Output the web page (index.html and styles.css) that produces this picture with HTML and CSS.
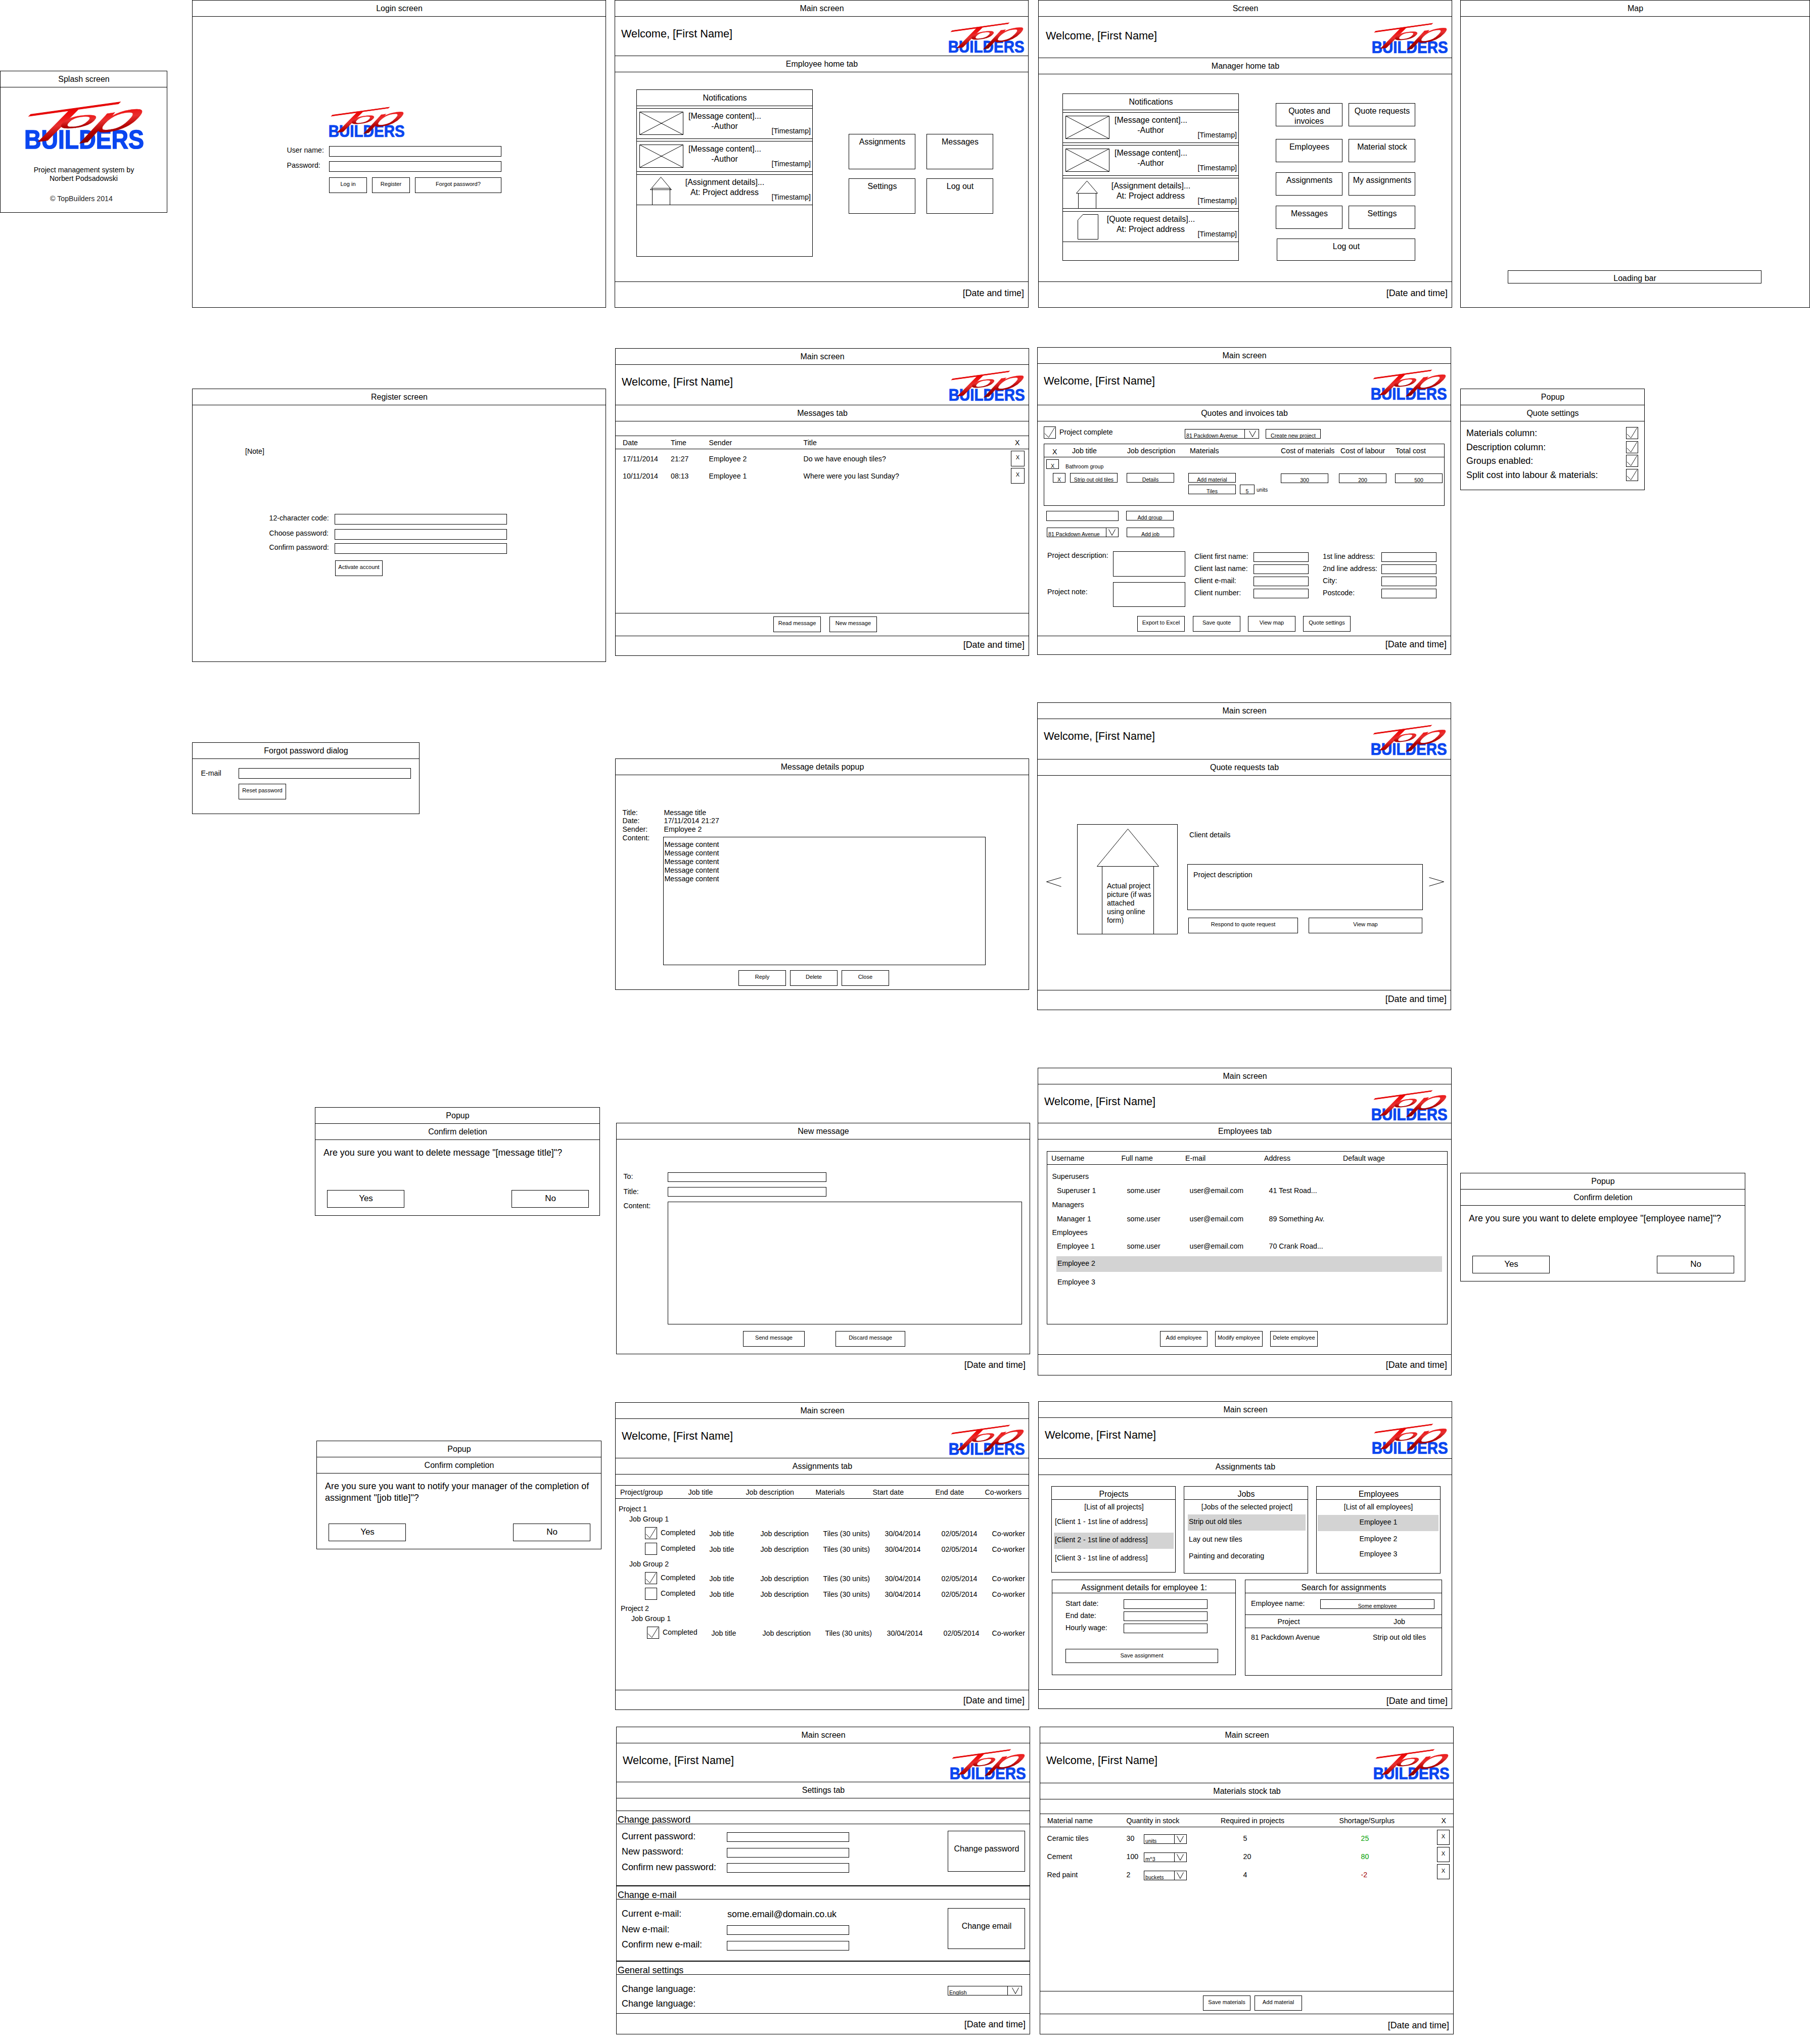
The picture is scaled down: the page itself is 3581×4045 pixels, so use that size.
FILE: index.html
```html
<!DOCTYPE html>
<html lang="en">
<head>
<meta charset="utf-8">
<title>TopBuilders wireframes</title>
<link rel="stylesheet" href="styles.css">
</head>
<body>
<svg class="sprites" aria-hidden="true">
  <defs>
    <linearGradient id="brush" x1="0" y1="0" x2="0" y2="1">
      <stop offset="0" stop-color="#c80000"/>
      <stop offset=".25" stop-color="#f00a0a"/>
      <stop offset=".5" stop-color="#e83030"/>
      <stop offset=".75" stop-color="#b00000"/>
      <stop offset="1" stop-color="#800000"/>
    </linearGradient>
    <symbol id="logo" viewBox="0 0 240 98">
      <text class="logo-builders" x="1" y="96.5" textLength="237" lengthAdjust="spacingAndGlyphs">BUILDERS</text>
      <text class="logo-top" transform="matrix(3.07 -.426 -.88 .89 -55.6 95)">T</text>
      <text class="logo-o" transform="matrix(1.31 -.1 -.45 .47 60 59)">o</text>
      <text class="logo-o" transform="matrix(1.8 -.28 -.747 .8 113.8 72.1)">p</text>
    </symbol>
    <symbol id="envelope" viewBox="0 0 87 46"><path d="M.5.5h86v45H.5zL86.5 45.5M.5 45.5 86.5.5"/></symbol>
    <symbol id="house" viewBox="0 0 44 56"><path d="M21.5.5 42.5 25.5H.5zM4.5 22.5h35v33h-35z"/></symbol>
    <symbol id="house-plain" viewBox="0 0 44 56"><path d="M21.5 1 42.5 25.5H.5zM4.5 25.5v30M39.5 25.5v30"/></symbol>
    <symbol id="document" viewBox="0 0 41 50"><path d="M10.5.5h30v49H.5v-38z"/></symbol>
    <symbol id="tick" viewBox="0 0 24 24"><path d="M1 14 9.5 22.5 22.5 1"/></symbol>
    <symbol id="chevron" viewBox="0 0 14 13"><path d="M.5.5 7 12.5 13.5.5"/></symbol>
  </defs>
</svg>

<main class="canvas">

  <section class="window splash">
    <h2 class="bar">Splash screen</h2>
    <svg class="logo logo-large"><use href="#logo"/></svg>
    <p class="credit">Project management system by<br>Norbert Podsadowski</p>
    <p class="copyright">© TopBuilders 2014</p>
  </section>

  <section class="window login">
    <h2 class="bar">Login screen</h2>
    <svg class="logo"><use href="#logo"/></svg>
    <div class="login-form">
      <label>User name:</label><span class="field"></span>
      <label>Password:</label><span class="field"></span>
      <div class="login-actions"><span class="btn">Log in</span><span class="btn">Register</span><span class="btn">Forgot password?</span></div>
    </div>
  </section>

  <section class="window screen employee-home">
    <h2 class="bar">Main screen</h2>
    <header class="banner"><p>Welcome, [First Name]</p><svg class="logo"><use href="#logo"/></svg></header>
    <h3 class="bar">Employee home tab</h3>
    <div class="body home-body">
      <div class="notifications">
        <h4>Notifications</h4>
        <div class="note"><svg class="envelope"><use href="#envelope"/></svg><p>[Message content]...<br>-Author</p><time>[Timestamp]</time></div>
        <div class="note"><svg class="envelope"><use href="#envelope"/></svg><p>[Message content]...<br>-Author</p><time>[Timestamp]</time></div>
        <div class="note late"><svg class="house"><use href="#house"/></svg><p>[Assignment details]...<br>At: Project address</p><time>[Timestamp]</time></div>
      </div>
      <nav class="tiles"><span>Assignments</span><span>Messages</span><span>Settings</span><span>Log out</span></nav>
    </div>
    <footer>[Date and time]</footer>
  </section>

  <section class="window screen manager-home">
    <h2 class="bar">Screen</h2>
    <header class="banner"><p>Welcome, [First Name]</p><svg class="logo"><use href="#logo"/></svg></header>
    <h3 class="bar">Manager home tab</h3>
    <div class="body home-body">
      <div class="notifications">
        <h4>Notifications</h4>
        <div class="note"><svg class="envelope"><use href="#envelope"/></svg><p>[Message content]...<br>-Author</p><time>[Timestamp]</time></div>
        <div class="note"><svg class="envelope"><use href="#envelope"/></svg><p>[Message content]...<br>-Author</p><time>[Timestamp]</time></div>
        <div class="note"><svg class="house"><use href="#house-plain"/></svg><p>[Assignment details]...<br>At: Project address</p><time>[Timestamp]</time></div>
        <div class="note late"><svg class="document"><use href="#document"/></svg><p>[Quote request details]...<br>At: Project address</p><time>[Timestamp]</time></div>
      </div>
      <nav class="tiles"><span>Quotes and<br>invoices</span><span>Quote requests</span><span>Employees</span><span>Material stock</span><span>Assignments</span><span>My assignments</span><span>Messages</span><span>Settings</span><span class="wide">Log out</span></nav>
    </div>
    <footer>[Date and time]</footer>
  </section>

  <section class="window map">
    <h2 class="bar">Map</h2>
    <div class="progress">Loading bar</div>
  </section>

  <section class="window register">
    <h2 class="bar">Register screen</h2>
    <p class="register-note">[Note]</p>
    <div class="register-form">
      <label>12-character code:</label><span class="field"></span>
      <label>Choose password:</label><span class="field"></span>
      <label>Confirm password:</label><span class="field"></span>
      <span class="btn">Activate account</span>
    </div>
  </section>

  <section class="window screen messages">
    <h2 class="bar">Main screen</h2>
    <header class="banner"><p>Welcome, [First Name]</p><svg class="logo"><use href="#logo"/></svg></header>
    <h3 class="bar">Messages tab</h3>
    <div class="body">
      <div class="spacer"></div>
      <div class="thead"><span>Date</span><span>Time</span><span>Sender</span><span>Title</span><span class="remove-head">X</span></div>
      <div class="trow"><span>17/11/2014</span><span>21:27</span><span>Employee 2</span><span>Do we have enough tiles?</span><span class="btn">X</span></div>
      <div class="trow"><span>10/11/2014</span><span>08:13</span><span>Employee 1</span><span>Where were you last Sunday?</span><span class="btn">X</span></div>
    </div>
    <div class="actions"><span class="btn">Read message</span><span class="btn">New message</span></div>
    <footer>[Date and time]</footer>
  </section>

  <section class="window screen quotes">
    <h2 class="bar">Main screen</h2>
    <header class="banner"><p>Welcome, [First Name]</p><svg class="logo"><use href="#logo"/></svg></header>
    <h3 class="bar">Quotes and invoices tab</h3>
    <div class="body">
      <div class="quote-tools">
        <svg class="check"><use href="#tick"/></svg><span class="check-label">Project complete</span>
        <span class="select"><span>81 Packdown Avenue</span><i><svg class="chevron"><use href="#chevron"/></svg></i></span>
        <span class="mini">Create new project</span>
      </div>
      <div class="quote-table">
        <div class="quote-head"><span class="drop">X</span><span>Job title</span><span>Job description</span><span>Materials</span><span>Cost of materials</span><span>Cost of labour</span><span>Total cost</span></div>
        <div class="quote-group"><span class="mini">X</span><span class="tiny">Bathroom group</span></div>
        <div class="quote-job"><span class="mini">X</span><span class="mini">Strip out old tiles</span><span class="mini">Details</span><span class="mini">Add material</span><span class="mini cost">300</span><span class="mini cost">200</span><span class="mini cost">500</span></div>
        <div class="quote-material"><span class="mini">Tiles</span><span class="mini">5</span><span class="tiny">units</span></div>
      </div>
      <div class="quote-add"><span class="field"></span><span class="mini">Add group</span></div>
      <div class="quote-add second"><span class="select"><span>81 Packdown Avenue</span><i><svg class="chevron"><use href="#chevron"/></svg></i></span><span class="mini">Add job</span></div>
      <div class="quote-form">
        <div class="form-notes"><label>Project description:</label><span class="field"></span><label class="lower">Project note:</label><span class="field short"></span></div>
        <div class="form-client"><label>Client first name:</label><span class="field"></span><label>Client last name:</label><span class="field"></span><label>Client e-mail:</label><span class="field"></span><label>Client number:</label><span class="field"></span></div>
        <div class="form-client address"><label>1st line address:</label><span class="field"></span><label>2nd line address:</label><span class="field"></span><label>City:</label><span class="field"></span><label>Postcode:</label><span class="field"></span></div>
      </div>
      <div class="quote-actions"><span class="btn">Export to Excel</span><span class="btn">Save quote</span><span class="btn">View map</span><span class="btn">Quote settings</span></div>
    </div>
    <footer>[Date and time]</footer>
  </section>

  <section class="window quote-settings">
    <h2 class="bar">Popup</h2>
    <h3 class="bar">Quote settings</h3>
    <div class="options">
      <label>Materials column:</label><svg class="check"><use href="#tick"/></svg>
      <label>Description column:</label><svg class="check"><use href="#tick"/></svg>
      <label>Groups enabled:</label><svg class="check"><use href="#tick"/></svg>
      <label>Split cost into labour &amp; materials:</label><svg class="check"><use href="#tick"/></svg>
    </div>
  </section>

  <section class="window forgot">
    <h2 class="bar">Forgot password dialog</h2>
    <div class="forgot-form"><label>E-mail</label><span class="field"></span><span class="btn">Reset password</span></div>
  </section>

  <section class="window message-details">
    <h2 class="bar">Message details popup</h2>
    <div class="message-grid">
      <label>Title:</label><span>Message title</span>
      <label>Date:</label><span>17/11/2014 21:27</span>
      <label>Sender:</label><span>Employee 2</span>
      <label>Content:</label>
      <div class="message-text">Message content<br>Message content<br>Message content<br>Message content<br>Message content</div>
    </div>
    <div class="message-actions"><span class="btn">Reply</span><span class="btn">Delete</span><span class="btn">Close</span></div>
  </section>

  <section class="window screen quote-requests">
    <h2 class="bar">Main screen</h2>
    <header class="banner"><p>Welcome, [First Name]</p><svg class="logo"><use href="#logo"/></svg></header>
    <h3 class="bar">Quote requests tab</h3>
    <div class="body request-body">
      <svg class="arrow" viewBox="0 0 30 19"><path d="M29.5.5.5 9 29.5 18.5"/></svg>
      <div class="picture">
        <svg viewBox="0 0 197 216"><path d="M99.5 8.5 160.500 82.5H38.500zM48.500 82.5V216M150.500 82.5V216"/></svg>
        <p>Actual project<br>picture (if was<br>attached<br>using online<br>form)</p>
      </div>
      <div class="request">
        <p>Client details</p>
        <div class="description">Project description</div>
        <div class="request-actions"><span class="btn">Respond to quote request</span><span class="btn">View map</span></div>
      </div>
      <svg class="arrow" viewBox="0 0 30 19"><path d="M.5.5 29.5 9 .5 17.5"/></svg>
    </div>
    <footer>[Date and time]</footer>
  </section>

  <section class="window confirm confirm-message">
    <h2 class="bar">Popup</h2>
    <h3 class="bar">Confirm deletion</h3>
    <p>Are you sure you want to delete message "[message title]"?</p>
    <div class="choices"><span>Yes</span><span>No</span></div>
  </section>

  <section class="window new-message">
    <h2 class="bar">New message</h2>
    <div class="compose">
      <label>To:</label><span class="field"></span>
      <label>Title:</label><span class="field"></span>
      <label>Content:</label><span class="field large"></span>
    </div>
    <div class="compose-actions"><span class="btn">Send message</span><span class="btn">Discard message</span></div>
  </section>
  <p class="loose-date">[Date and time]</p>

  <section class="window screen employees">
    <h2 class="bar">Main screen</h2>
    <header class="banner"><p>Welcome, [First Name]</p><svg class="logo"><use href="#logo"/></svg></header>
    <h3 class="bar">Employees tab</h3>
    <div class="body">
      <div class="staff">
        <div class="staff-head"><span>Username</span><span>Full name</span><span>E-mail</span><span>Address</span><span>Default wage</span></div>
        <p class="staff-role">Superusers</p>
        <div class="staff-row"><span>Superuser 1</span><span>some.user</span><span>user@email.com</span><span>41 Test Road...</span></div>
        <p class="staff-role">Managers</p>
        <div class="staff-row"><span>Manager 1</span><span>some.user</span><span>user@email.com</span><span>89 Something Av.</span></div>
        <p class="staff-role tight">Employees</p>
        <div class="staff-row tight"><span>Employee 1</span><span>some.user</span><span>user@email.com</span><span>70 Crank Road...</span></div>
        <div class="staff-row selected"><span>Employee 2</span></div>
        <div class="staff-row last"><span>Employee 3</span></div>
      </div>
      <div class="staff-actions"><span class="btn">Add employee</span><span class="btn">Modify employee</span><span class="btn">Delete employee</span></div>
    </div>
    <footer>[Date and time]</footer>
  </section>

  <section class="window confirm confirm-employee">
    <h2 class="bar">Popup</h2>
    <h3 class="bar">Confirm deletion</h3>
    <p>Are you sure you want to delete employee "[employee name]"?</p>
    <div class="choices"><span>Yes</span><span>No</span></div>
  </section>

  <section class="window confirm confirm-completion">
    <h2 class="bar">Popup</h2>
    <h3 class="bar">Confirm completion</h3>
    <p>Are you sure you want to notify your manager of the completion of<br>assignment "[job title]"?</p>
    <div class="choices"><span>Yes</span><span>No</span></div>
  </section>

  <section class="window screen assignments">
    <h2 class="bar">Main screen</h2>
    <header class="banner"><p>Welcome, [First Name]</p><svg class="logo"><use href="#logo"/></svg></header>
    <h3 class="bar">Assignments tab</h3>
    <div class="body">
      <div class="spacer"></div>
      <div class="jobs-head"><span>Project/group</span><span>Job title</span><span>Job description</span><span>Materials</span><span>Start date</span><span>End date</span><span>Co-workers</span></div>
      <p class="project">Project 1</p>
      <p class="group">Job Group 1</p>
      <div class="job"><svg class="check"><use href="#tick"/></svg><b>Completed</b><span>Job title</span><span>Job description</span><span>Tiles (30 units)</span><span>30/04/2014</span><span>02/05/2014</span><span>Co-worker</span></div>
      <div class="job second"><svg class="check"></svg><b>Completed</b><span>Job title</span><span>Job description</span><span>Tiles (30 units)</span><span>30/04/2014</span><span>02/05/2014</span><span>Co-worker</span></div>
      <p class="group next">Job Group 2</p>
      <div class="job"><svg class="check"><use href="#tick"/></svg><b>Completed</b><span>Job title</span><span>Job description</span><span>Tiles (30 units)</span><span>30/04/2014</span><span>02/05/2014</span><span>Co-worker</span></div>
      <div class="job second"><svg class="check"></svg><b>Completed</b><span>Job title</span><span>Job description</span><span>Tiles (30 units)</span><span>30/04/2014</span><span>02/05/2014</span><span>Co-worker</span></div>
      <div class="project-two">
        <p class="project">Project 2</p>
        <p class="group">Job Group 1</p>
        <div class="job"><svg class="check"><use href="#tick"/></svg><b>Completed</b><span>Job title</span><span>Job description</span><span>Tiles (30 units)</span><span>30/04/2014</span><span>02/05/2014</span><span>Co-worker</span></div>
      </div>
    </div>
    <footer>[Date and time]</footer>
  </section>

  <section class="window screen planner">
    <h2 class="bar">Main screen</h2>
    <header class="banner"><p>Welcome, [First Name]</p><svg class="logo"><use href="#logo"/></svg></header>
    <h3 class="bar">Assignments tab</h3>
    <div class="body">
      <div class="lists">
        <div class="card list-projects"><h4>Projects</h4><p class="hint">[List of all projects]</p><p>[Client 1 - 1st line of address]</p><p class="on">[Client 2 - 1st line of address]</p><p>[Client 3 - 1st line of address]</p></div>
        <div class="card list-jobs"><h4>Jobs</h4><p class="hint">[Jobs of the selected project]</p><p class="on">Strip out old tiles</p><p>Lay out new tiles</p><p>Painting and decorating</p></div>
        <div class="card list-employees"><h4>Employees</h4><p class="hint">[List of all employees]</p><p class="on">Employee 1</p><p>Employee 2</p><p>Employee 3</p></div>
      </div>
      <div class="panels">
        <div class="card details">
          <h4>Assignment details for employee 1:</h4>
          <div class="details-form"><label>Start date:</label><span class="field"></span><label>End date:</label><span class="field"></span><label>Hourly wage:</label><span class="field"></span></div>
          <span class="btn">Save assignment</span>
        </div>
        <div class="card search">
          <h4>Search for assignments</h4>
          <div class="search-name"><label>Employee name:</label><span class="mini">Some employee</span></div>
          <div class="search-head"><span>Project</span><span>Job</span></div>
          <div class="search-row"><span>81 Packdown Avenue</span><span>Strip out old tiles</span></div>
        </div>
      </div>
    </div>
    <footer>[Date and time]</footer>
  </section>

  <section class="window screen settings">
    <h2 class="bar">Main screen</h2>
    <header class="banner"><p>Welcome, [First Name]</p><svg class="logo"><use href="#logo"/></svg></header>
    <h3 class="bar">Settings tab</h3>
    <div class="body">
      <div class="spacer"></div>
      <h4>Change password</h4>
      <div class="setting">
        <label>Current password:</label><span class="field"></span><span class="big-btn">Change password</span>
        <label>New password:</label><span class="field"></span>
        <label>Confirm new password:</label><span class="field"></span>
      </div>
      <h4>Change e-mail</h4>
      <div class="setting email">
        <label>Current e-mail:</label><span>some.email@domain.co.uk</span><span class="big-btn">Change email</span>
        <label>New e-mail:</label><span class="field"></span>
        <label>Confirm new e-mail:</label><span class="field"></span>
      </div>
      <h4>General settings</h4>
      <div class="setting general">
        <label>Change language:</label><span class="select"><span>English</span><i><svg class="chevron"><use href="#chevron"/></svg></i></span>
        <label>Change language:</label>
      </div>
    </div>
    <footer>[Date and time]</footer>
  </section>

  <section class="window screen materials">
    <h2 class="bar">Main screen</h2>
    <header class="banner"><p>Welcome, [First Name]</p><svg class="logo"><use href="#logo"/></svg></header>
    <h3 class="bar">Materials stock tab</h3>
    <div class="body">
      <div class="spacer"></div>
      <div class="stock-head"><span>Material name</span><span>Quantity in stock</span><span>Required in projects</span><span>Shortage/Surplus</span><span>X</span></div>
      <div class="stock">
        <div class="stock-rows">
          <span>Ceramic tiles</span><span>30</span><span class="select"><span>units</span><i><svg class="chevron"><use href="#chevron"/></svg></i></span><span>5</span><span class="surplus">25</span>
          <span>Cement</span><span>100</span><span class="select"><span>m^3</span><i><svg class="chevron"><use href="#chevron"/></svg></i></span><span>20</span><span class="surplus">80</span>
          <span>Red paint</span><span>2</span><span class="select"><span>buckets</span><i><svg class="chevron"><use href="#chevron"/></svg></i></span><span>4</span><span class="shortage">-2</span>
        </div>
        <div class="stock-remove"><span class="btn">X</span><span class="btn">X</span><span class="btn">X</span></div>
      </div>
    </div>
    <div class="actions"><span class="btn">Save materials</span><span class="btn">Add material</span></div>
    <footer>[Date and time]</footer>
  </section>

</main>
</body>
</html>
```
FILE: styles.css
```css
* { box-sizing: border-box; margin: 0; padding: 0; }

body {
  background: #fff;
  color: #000;
  font: 14.2px/16px "Liberation Sans", Arial, sans-serif;
  text-indent: 1px;
  white-space: nowrap;
}

h2, h3, h4, b, i { font-weight: normal; font-style: normal; }

.sprites { position: absolute; width: 0; height: 0; }
.canvas { position: relative; width: 3581px; height: 4045px; overflow: hidden; }

/* Shared pieces */

.window {
  position: absolute;
  display: flex;
  flex-direction: column;
  width: 819px;
  border: 1px solid #000;
}
.screen { height: 609px; }

.bar {
  flex: none;
  height: 32px;
  border-bottom: 1px solid #000;
  font-size: 16px;
  line-height: 31px;
  text-align: center;
}

.banner {
  flex: none;
  display: flex;
  justify-content: space-between;
  align-items: flex-start;
  height: 78px;
  padding: 9px 6px 0 12px;
  border-bottom: 1px solid #000;
  text-indent: 0;
}
.banner p { margin-top: 12px; font-size: 21.7px; line-height: 26px; }

.body { flex: 1; min-height: 0; }

.window footer, .loose-date { font-size: 17.9px; line-height: 22px; text-align: right; }
.window footer {
  flex: none;
  height: 39px;
  padding: 6px 8px 0 0;
  border-top: 1px solid #000;
}

.logo { display: block; width: 153px; height: 62.5px; text-indent: 0; }
.logo-large { width: 240px; height: 98px; }
.logo-builders { font: bold 52px "Liberation Sans", Arial, sans-serif; fill: #0a46f0; stroke: #0a46f0; stroke-width: 1.5; }
.logo-top, .logo-o { font-size: 100px; fill: url(#brush); stroke: url(#brush); }
.logo-top { font-family: "DejaVu Sans", sans-serif; font-weight: 200; stroke-width: 1.6; }
.logo-o { font-family: "Liberation Sans", Arial, sans-serif; stroke-width: .5; }

.envelope, .house, .document, .chevron, .check, .arrow, .picture svg { fill: none; stroke: #000; stroke-width: 1; }

.field { display: block; height: 19px; border: 1px solid #000; }

.btn {
  display: block;
  width: 94px;
  height: 31px;
  padding-top: 5px;
  border: 1px solid #000;
  font-size: 11.1px;
  line-height: 14px;
  text-align: center;
  text-indent: 0;
}

.mini {
  display: block;
  width: 94px;
  height: 19px;
  padding-top: 6px;
  border: 1px solid #000;
  font-size: 10.6px;
  line-height: 12px;
  text-align: center;
  text-indent: 0;
}
.tiny { font-size: 10.5px; }

.select {
  display: flex;
  justify-content: space-between;
  width: 147px;
  height: 19px;
  border: 1px solid #000;
  font-size: 10.6px;
  line-height: 12px;
}
.select > span { padding: 6px 0 0 2px; text-indent: 0; }
.select > i { width: 28px; padding: 2px 0 0 8px; border-left: 1px solid #000; }
.chevron { display: block; width: 14px; height: 13px; }
.check { display: block; width: 24px; height: 24px; border: 1px solid #000; }

.spacer { height: 29px; border-bottom: 1px solid #000; }
.thead, .stock-head, .jobs-head, .staff-head, .quote-head {
  display: grid;
  align-items: center;
  height: 26px;
  border-bottom: 1px solid #000;
}
.actions { flex: none; display: flex; height: 45px; border-top: 1px solid #000; }

/* Splash */

.splash { left: 0; top: 140px; width: 331px; height: 281px; }
.splash .logo { margin: 24px 0 0 46px; }
.splash .credit { margin-top: 33px; line-height: 17px; text-align: center; }
.splash .copyright { margin: 23px 10px 0 0; color: #222; text-align: center; }

/* Login */

.login { left: 380px; top: 0; height: 609px; }
.login .logo { margin: 176px 0 0 268px; }
.login-form {
  display: grid;
  grid-template-columns: 84.5px 341px;
  grid-template-rows: 30px 32px 31px;
  margin: 17.5px 0 0 185.5px;
}
.login-form .field { height: 21px; }
.login-actions { grid-column: 2; display: flex; gap: 10px; }
.login-actions .btn { width: 75px; }
.login-actions .btn:last-child { width: 171px; }

/* Home screens */

.employee-home { left: 1216px; top: 0; }
.employee-home footer, .manager-home footer { height: 51px; padding-top: 11px; }
.home-body { display: flex; align-items: flex-start; }
.notifications { width: 349px; height: 331px; margin: 34px 0 0 42px; border: 1px solid #000; }
.notifications h4 {
  height: 32px;
  border-bottom: 1px solid #000;
  font-size: 16px;
  line-height: 31px;
  text-align: center;
}
.note {
  display: grid;
  height: 61px;
  margin-top: 4px;
  border: solid #000;
  border-width: 1px 0;
}
.note.late { margin-top: 5px; }
.note > * { grid-area: 1 / 1; align-self: start; }
.note p { padding-top: 5px; font-size: 16px; line-height: 20px; text-align: center; }
.note time { justify-self: end; margin: 36px 3px 0 0; }
.envelope { width: 87px; height: 46px; margin: 6px 0 0 5px; }
.house { width: 44px; height: 56px; margin: 4px 0 0 26px; }
.document { width: 41px; height: 50px; margin: 5px 0 0 29px; }

.tiles {
  display: grid;
  grid-template-columns: 132px 132px;
  grid-auto-rows: 70px;
  gap: 18px 22px;
  margin: 122px 0 0 71px;
  font-size: 16px;
  line-height: 20px;
  text-align: center;
}
.tiles span { padding-top: 5px; border: 1px solid #000; }

.manager-home { left: 2054px; top: 0; }
.manager-home .banner { height: 82px; padding-left: 14px; }
.manager-home .banner p { margin-top: 16px; }
.manager-home .banner .logo { margin-top: 1px; }
.manager-home .notifications { margin: 38px 0 0 47px; }
.manager-home .tiles {
  grid-template-rows: 71px 66px 66px 65px 44px;
  gap: 0 12px;
  margin: 57px 0 0 73px;
}
.manager-home .tiles span { height: 46px; }
.manager-home .tiles .wide { grid-column: 1 / 3; height: 44px; margin-left: 2px; }

/* Map */

.map { left: 2889px; top: 0; width: 692px; height: 609px; }
.progress {
  width: 502px;
  height: 26px;
  margin: 502px 0 0 93px;
  padding-top: 5px;
  border: 1px solid #000;
  font-size: 16px;
  line-height: 20px;
  text-align: center;
}

/* Register and forgotten password */

.register { left: 380px; top: 769px; height: 541px; }
.register-note { margin: 83px 0 0 103px; }
.register-form {
  display: grid;
  grid-template-columns: 130.5px 341px;
  grid-template-rows: 30px 28px 34px 31px;
  margin: 116px 0 0 150.5px;
}
.register-form .field { height: 21px; }
.register-form .btn { grid-column: 2; margin-left: 1px; }

.forgot { left: 380px; top: 1469px; width: 450px; height: 142px; }
.forgot-form {
  display: grid;
  grid-template-columns: 75.5px 341px;
  grid-template-rows: 31px 31px;
  margin: 18px 0 0 15.5px;
}
.forgot-form label { margin-top: 2px; }
.forgot-form .field { height: 21px; }
.forgot-form .btn { grid-column: 2; }

/* Messages */

.messages { left: 1217px; top: 689px; }
.messages .banner { height: 80px; }
.thead, .trow { grid-template-columns: 95px 75.5px 187px 411.5px 27px; padding-left: 13px; }
.thead { padding-top: 1px; }
.remove-head { padding-left: 7px; }
.trow { display: grid; align-items: center; height: 31px; margin-top: 3px; }
.trow .btn { width: 27px; }
.messages .actions { gap: 17px; padding: 6px 0 0 312px; }

.message-details { left: 1217px; top: 1501px; height: 458px; }
.message-grid {
  display: grid;
  grid-template-columns: 82px auto;
  grid-template-rows: repeat(3, 16.9px) auto;
  margin: 65.5px 0 0 12.5px;
  line-height: 17px;
}
.message-text {
  width: 638px;
  height: 254px;
  margin: 6px 0 0 -1px;
  padding: 6px 2px;
  border: 1px solid #000;
  line-height: 16.9px;
  text-indent: 0;
}
.message-actions { display: flex; gap: 8px; margin: 10px 0 0 243px; }

.new-message { left: 1219px; top: 2222px; height: 458px; }
.compose {
  display: grid;
  grid-template-columns: 88.5px 314px;
  grid-template-rows: 29px 29px 243px;
  margin: 65px 0 0 12.5px;
}
.compose label:nth-of-type(2) { margin-top: 1px; }
.compose .large { width: 701px; height: 243px; }
.compose-actions { display: flex; gap: 61px; margin: 13px 0 0 250px; }
.compose-actions .btn { width: 122px; }
.compose-actions .btn:last-child { width: 138px; }
.loose-date { position: absolute; left: 1829px; top: 2690px; width: 200px; }

/* Quotes and invoices */

.quotes { left: 2052px; top: 687px; }
.quotes .banner { height: 82px; }
.quotes footer { height: 37px; padding-top: 5px; }
.quote-tools {
  display: grid;
  grid-template-columns: 30px 249px 160px auto;
  align-items: start;
  height: 44px;
  padding: 10px 0 0 12px;
}
.check-label { margin-top: 3px; }
.quote-tools .select, .quote-tools .mini { margin-top: 5px; }
.quote-tools .mini { width: 109px; }
.quote-table { width: 793px; height: 123px; margin-left: 12px; border: 1px solid #000; }
.quote-head { grid-template-columns: 39px 109px 124px 180px 118px 109px auto; padding-left: 15px; }
.quote-head .drop { padding-top: 5px; }
.quote-group { display: flex; height: 31px; padding: 4px 0 0 4px; }
.quote-group .mini { width: 25px; }
.quote-group .tiny { margin: 6px 0 0 12px; }
.quote-job {
  display: grid;
  grid-template-columns: 34px 112px 122px 183px 115px 111px auto;
  height: 23px;
  padding-left: 17px;
}
.quote-job .mini:first-child { width: 25px; }
.quote-job .cost { margin-top: 1px; }
.quote-material { display: flex; padding-left: 285px; }
.quote-material .mini + .mini { width: 29px; margin-left: 8px; }
.quote-material .tiny { margin: 2px 0 0 3px; }
.quote-add { display: flex; gap: 15px; margin: 10px 0 0 17px; }
.quote-add .field { width: 143px; height: 20px; }
.quote-add.second { gap: 16px; margin: 13px 0 0 18px; }
.quote-add .select { width: 142px; }
.quote-add .select i { width: 24px; padding-left: 4px; }
.quote-form { display: flex; align-items: flex-start; height: 128px; margin: 28px 0 0 18px; }
.form-notes { display: grid; grid-template-columns: 131px 143px; grid-template-rows: 61px 49px; }
.form-notes .field { height: 50px; }
.form-notes .short { height: 49px; }
.form-notes .lower { margin-top: 11px; }
.form-client {
  display: grid;
  grid-template-columns: 118px 109px;
  grid-auto-rows: 24px;
  margin: 2px 0 0 17px;
}
.form-client.address { grid-template-columns: 117px 109px; margin-left: 27px; }
.quote-actions { display: flex; gap: 15px; margin-left: 197px; }
.quote-actions .btn:first-child { margin-right: 1px; }

.quote-settings { left: 2889px; top: 769px; width: 365px; height: 201px; }
.options {
  display: grid;
  grid-template-columns: 317px 24px;
  grid-auto-rows: 27.5px;
  padding: 11px 0 0 10px;
  font-size: 17.9px;
  line-height: 24px;
}

/* Quote requests */

.quote-requests { left: 2052px; top: 1390px; }
.quote-requests .banner { height: 80px; }
.request-body { display: flex; align-items: flex-start; }
.arrow { width: 30px; height: 19px; margin: 201px 0 0 17px; }
.picture { display: grid; width: 199px; height: 218px; margin: 96px 0 0 31px; border: 1px solid #000; }
.picture > * { grid-area: 1 / 1; }
.picture svg { width: 197px; height: 216px; }
.picture p { padding: 113px 0 0 58px; line-height: 16.9px; text-indent: 0; }
.request { width: 466px; margin: 109px 0 0 19px; }
.request > p { padding-left: 3px; }
.description { height: 91px; margin-top: 50px; padding: 12px 0 0 10px; border: 1px solid #000; }
.request-actions { display: flex; gap: 21px; margin: 15px 0 0 2px; }
.request-actions .btn { width: 217px; }
.request-actions .btn:last-child { width: 225px; }
.request + .arrow { margin-left: 12px; }

/* Confirmation popups */

.confirm { width: 564px; height: 215px; }
.confirm > p { margin: 14px 0 0 16px; font-size: 17.9px; line-height: 23px; text-indent: 0; }
.choices { display: flex; justify-content: space-between; margin: auto 21px 15px 23px; }
.choices span {
  width: 153px;
  height: 35px;
  padding-top: 5px;
  border: 1px solid #000;
  font-size: 17px;
  line-height: 22px;
  text-align: center;
}
.confirm-message { left: 623px; top: 2191px; }
.confirm-employee { left: 2889px; top: 2321px; }
.confirm-completion { left: 626px; top: 2851px; }

/* Employees */

.employees { left: 2053px; top: 2113px; }
.employees .banner { height: 77px; }
.employees footer { height: 41px; padding-top: 9px; }
.staff { width: 793px; height: 343px; margin: 23px 0 0 17px; border: 1px solid #000; }
.staff-head { grid-template-columns: 138.5px 126.5px 156px 156px auto; margin-bottom: 8.5px; padding-left: 7px; }
.staff-role { height: 28.2px; padding-left: 8.5px; line-height: 28px; }
.staff-row { display: grid; grid-template-columns: 138.5px 124px 157px auto; height: 28.2px; margin-left: 18px; line-height: 28px; }
.tight { height: 26.4px; line-height: 26px; }
.staff .selected { width: 763px; height: 31px; margin-top: 7px; padding-left: 1px; background: #d3d3d3; line-height: 29px; }
.staff .last { margin-top: 6px; padding-left: 1px; }
.staff-actions { display: flex; gap: 15px; margin: 13px 0 0 241px; }

/* Assignments */

.assignments { left: 1217px; top: 2775px; }
.assignments footer { padding-top: 9px; }
.assignments .spacer { height: 22px; }
.jobs-head { grid-template-columns: 134.5px 114px 138px 113px 124px 98px auto; margin-bottom: 10px; padding-left: 8px; }
.project, .group { height: 20px; padding-left: 5px; line-height: 20px; }
.group { padding-left: 26px; }
.group.next { margin-top: 8px; }
.job {
  display: grid;
  grid-template-columns: 30px 96.5px 101px 124px 122px 112px 100px auto;
  height: 24px;
  margin-top: 6px;
  padding-left: 58px;
  line-height: 23px;
}
.job span { padding-top: 2px; }
.job.second { margin-top: 7px; }
.project-two { margin: 7px 0 0 4px; }
.project-two .job { grid-template-columns: 30px 96.5px 101px 124px 122px 112px 96px auto; }

/* Manager assignments */

.planner { left: 2054px; top: 2773px; }
.planner .banner { height: 81px; }
.planner footer { height: 38px; padding-top: 11px; }
.card { border: 1px solid #000; }
.card h4 {
  height: 26px;
  padding-top: 5px;
  border-bottom: 1px solid #000;
  font-size: 16px;
  line-height: 20px;
  text-align: center;
}
.lists { display: flex; align-items: flex-start; gap: 16px; height: 173px; margin: 22px 0 0 25px; }
.lists .card { display: grid; grid-template-rows: 26px 29px 36px 36px 36px; align-items: start; width: 246px; height: 173px; }
.lists .list-projects { height: 171px; }
.lists .list-jobs { grid-template-rows: 26px 29px 35px 33px 33px; }
.lists .list-employees { grid-template-rows: 26px 30px 33px 30px 30px; }
.lists p { height: 32px; margin: 0 3px 0 4px; padding-left: 1px; line-height: 29px; }
.lists .hint, .list-employees p { padding-left: 0; text-align: center; }
.list-jobs p { margin: 0 4px 0 7px; }
.list-employees p { margin: 0 3px 0 2px; }
.on { background: #d3d3d3; }
.panels { display: flex; align-items: flex-start; gap: 18px; margin: 12px 0 0 26px; }
.details { width: 364px; height: 189px; }
.details-form {
  display: grid;
  grid-template-columns: 116px 166px;
  grid-auto-rows: 24px;
  margin: 12px 0 0 25px;
}
.details .btn { width: 302px; height: 28px; margin: 26px 0 0 26px; }
.search { width: 390px; height: 190px; }
.search-name { display: flex; justify-content: space-between; height: 43px; padding: 12px 14px 0 10px; border-bottom: 1px solid #000; }
.search-name .mini { width: 226px; }
.search-head { display: grid; grid-template-columns: 170px 268px; height: 26px; border-bottom: 1px solid #000; line-height: 26px; text-align: center; }
.search-row { display: flex; justify-content: space-between; padding: 10px 31px 0 10px; }

/* Settings */

.settings { left: 1219px; top: 3417px; }
.settings .banner { height: 77px; }
.settings footer { height: 41px; padding-top: 10px; }
.settings .spacer { height: 25px; }
.settings h4 { height: 26px; padding: 7px 0 0 1px; border-bottom: 1px solid #000; font-size: 17.9px; line-height: 20px; }
.setting {
  display: grid;
  grid-template-columns: 209px 437px 153px;
  grid-template-rows: repeat(3, 30.5px);
  align-items: center;
  align-content: start;
  height: 123px;
  padding: 8.5px 0 0 9px;
  border-bottom: 2px solid #000;
  font-size: 17.9px;
}
.setting .field { width: 242px; margin-top: 4px; }
.big-btn {
  grid-column: 3;
  grid-row: 1 / 4;
  align-self: start;
  height: 81px;
  margin-top: 4px;
  padding-top: 25px;
  border: 1px solid #000;
  font-size: 16px;
  line-height: 20px;
  text-align: center;
}
.setting.email { padding-top: 13px; }
.setting.email > span:nth-child(2) { padding-top: 1px; }
.setting.general { grid-template-rows: 29px 29px; height: auto; padding-top: 13.5px; border-bottom: 0; }
.general .select { grid-column: 3; margin-top: 6px; }

/* Materials */

.materials { left: 2057px; top: 3417px; }
.materials .banner { height: 79px; }
.materials footer { height: 40px; padding-top: 11px; }
.stock-head { grid-template-columns: 156.5px 186.5px 234.5px 202px auto; padding-left: 13px; }
.stock { display: flex; align-items: flex-start; }
.stock-rows {
  display: grid;
  grid-template-columns: 157px 35.5px 195.5px 233px 151.5px;
  grid-auto-rows: 36px;
  align-items: center;
  padding: 4px 0 0 12.5px;
}
.stock .select { width: 85px; margin-top: 2px; }
.stock .select i { width: 24px; padding-left: 4px; }
.stock-remove { display: grid; gap: 4px; margin-top: 5px; }
.stock-remove .btn { width: 25px; height: 30px; }
.materials .actions { gap: 8px; padding: 8px 0 0 322px; }
.materials .actions .btn { height: 30px; }
.surplus { color: #00a000; }
.shortage { color: #a00000; }
```
